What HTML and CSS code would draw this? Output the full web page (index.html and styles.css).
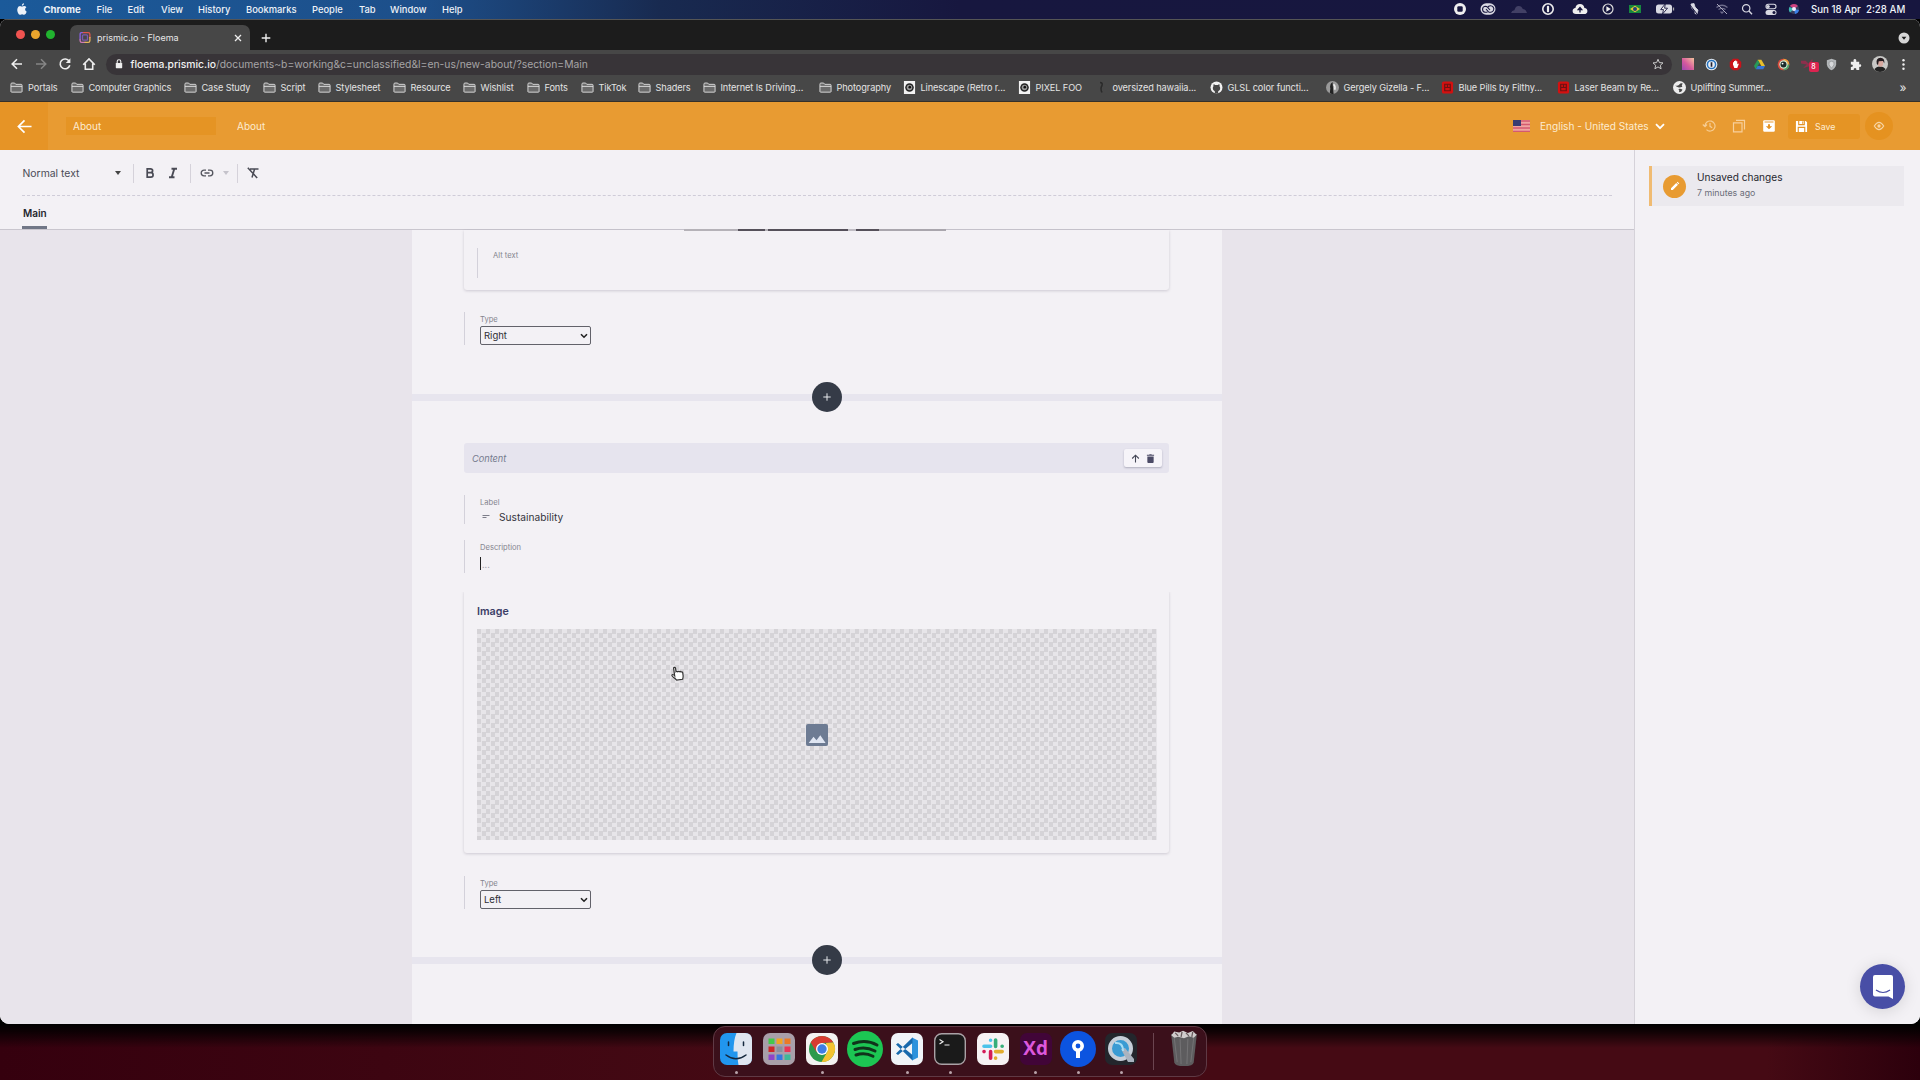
FILE: index.html
```html
<!DOCTYPE html>
<html lang="en">
<head>
<meta charset="utf-8">
<title>prismic.io - Floema</title>
<link rel="stylesheet" href="styles.css">
</head>
<body>
<svg class="defs" width="0" height="0">
  <symbol id="folder" viewBox="0 0 14 12"><path d="M1 10.5V2.5Q1 1.2 2 1.2H5L6.2 2.6H12Q13 2.6 13 3.6V10.5Q13 11 12 11H2Q1 11 1 10.5Z" fill="#6b6b6b" stroke="#dedede"/><path d="M1 4.8H13" stroke="#dedede"/></symbol>
  <symbol id="eyeball" viewBox="0 0 12 14"><path fill="#f2f2f2" d="M0 0h12v14H0z"/><circle cx="6" cy="7" r="4.6" fill="#222"/><circle cx="6" cy="7" r="3" fill="#999"/><circle cx="6.3" cy="6.6" r="1.4" fill="#111"/></symbol>
  <symbol id="redbook" viewBox="0 0 13 14"><rect x=".5" y=".5" width="12" height="13" rx="2" fill="#d31010"/><path d="M3.5 3.5h6v7h-6zM3.5 7h6M6.5 3.5V7" fill="none" stroke="#6d1212" stroke-width="1.3"/></symbol>
  <symbol id="globe" viewBox="0 0 12 12"><circle cx="6" cy="6" r="6" fill="#ececec"/><path d="M2 4.2Q4.500 5 5.600 3.400 6.800 1.800 9 2.200 7.400 4 8.600 5.200 6.500 6.200 5.400 5.900 3.400 5.800 2 4.200ZM5 7.400Q7 6.800 8.800 8 7.800 10.300 5.600 10.400 6.200 8.800 5 7.400Z" fill="#474747"/></symbol>
</svg>

<header class="menubar">
  <svg class="apple" viewBox="0 0 10 12"><path fill="#eef3fa" d="M7 .2Q7.1 1.3 6.4 2.1 5.8 2.8 4.9 2.8 4.8 1.8 5.4 1.1 6 .4 7 .2ZM7 3.1Q8.6 3.1 9.4 4.3 8 5.2 8.1 6.6 8.2 8.2 9.7 8.8 8.7 11.7 7.2 11.8 6.6 11.8 5.9 11.5 5.1 11.2 4.3 11.5 3.6 11.8 3.1 11.8 1.9 11.8 1 9.9 0 7.9.3 6 .8 3.2 3 3.1 3.7 3.1 4.3 3.4 5 3.7 5.5 3.5 6.3 3.1 7 3.1Z"/></svg>
  <nav class="menus"><b>Chrome</b><span>File</span><span>Edit</span><span>View</span><span>History</span><span>Bookmarks</span><span>People</span><span>Tab</span><span>Window</span><span>Help</span></nav>
  <div class="status">
    <svg viewBox="0 0 16 16"><circle cx="8" cy="8" r="6" fill="#eee"/><rect x="5.3" y="5.3" width="5.4" height="5.4" rx="1.2" fill="#18173f"/></svg>
    <svg viewBox="0 0 16 16"><rect x=".5" y="2.300" width="15" height="11.400" rx="5.700" fill="#d9d9e3"/><path d="M7.500 11.300H5.100A3.100 3.100 0 0 1 5.100 5.200Q6.700 5.200 7.700 6.400L10 9M8.500 11.300H10.900A3.300 3.300 0 1 0 7.600 6.500M6 8 8.500 10.800" fill="none" stroke="#18173f" stroke-width="1.100"/></svg>
    <svg viewBox="0 0 16 16"><path d="M0 12Q1 9.200 3.400 9.300 4.400 5 7.500 5 10.500 4.800 11.800 8 15 8 16 12Z" fill="#424065"/></svg>
    <svg viewBox="0 0 16 16"><circle cx="8" cy="8" r="5.200" fill="none" stroke="#eee" stroke-width="1.600"/><rect x="6.900" y="4.800" width="2.200" height="6.400" rx="1" fill="#eee"/></svg>
    <svg viewBox="0 0 16 16"><path d="M4 13Q.6 13 .6 10 .7 7.400 3.400 7.100 4 3 8 3 11.800 3.200 12.400 7 15.500 7.300 15.400 10.200 15.300 13 12 13Z" fill="#eee"/><path d="M8 11.500V8M6.300 8.500 8 6.500l1.700 2Z" fill="#18173f" stroke="#18173f" stroke-width="1.300"/></svg>
    <svg viewBox="0 0 16 16"><circle cx="8" cy="8" r="5" fill="none" stroke="#ddd" stroke-width="1.200"/><path d="M6.400 5.300 10.800 8 6.400 10.700Z" fill="#eee"/></svg>
    <svg viewBox="0 0 16 16"><path d="M2 4h12v8H2z" fill="#16883f"/><path d="M3 8 8 4.800 13 8 8 11.200Z" fill="#e5cb36"/><circle cx="8" cy="8" r="2" fill="#233f7c"/></svg>
    <svg class="battery" viewBox="0 0 20 16"><rect x="1" y="3.500" width="16" height="9" rx="2.500" fill="#d9d9e3"/><path d="M18.500 6.500v3" stroke="#aaa" stroke-width="1.300"/><path d="M10.300 2.800 5.700 8.600H8.500L7.500 13l5-5.800H9.600Z" fill="#eee" stroke="#18173f" stroke-width=".9"/></svg>
    <svg viewBox="0 0 16 16"><path d="M5 3l3-.5L9 6l3 3-1 4-2-.5V10L5.500 7Z" fill="#d9d9e3" stroke="#d9d9e3" stroke-width=".8"/><path d="m4 4 7 9" stroke="#18173f"/></svg>
    <svg viewBox="0 0 16 16"><path d="M2.500 6.500Q8 2 13.500 6.500M4.500 8.600Q8 6 11.500 8.600M6.500 10.500 8 12l1.500-1.500" fill="none" stroke="#6d6c8b" stroke-width="1.300"/><path d="m3 3 10 10" stroke="#aaa9bd"/></svg>
    <svg viewBox="0 0 16 16"><circle cx="7.200" cy="7.300" r="3.700" fill="none" stroke="#d9d9e3" stroke-width="1.200"/><path d="m10 10 3 3.200" stroke="#d9d9e3" stroke-width="1.400"/></svg>
    <svg viewBox="0 0 16 16"><rect x="3" y="3.300" width="10" height="4.400" rx="2.200" fill="none" stroke="#d9d9e3" stroke-width="1.100"/><circle cx="5.200" cy="5.500" r="1.600" fill="#d9d9e3"/><rect x="2.500" y="9" width="11" height="5" rx="2.500" fill="#d9d9e3"/><circle cx="11" cy="11.500" r="1.500" fill="#18173f"/></svg>
    <svg viewBox="0 0 16 16"><circle cx="8" cy="8" r="5" fill="#38405f"/><path d="M8 8 4 4.800A5 5 0 0 1 12 5Z" fill="#d0417f"/><path d="M8 8l5 1a5 5 0 0 1-4 4Z" fill="#3c80e6"/><path d="M8 8l-4 3.500A5 5 0 0 1 3.500 6Z" fill="#3fb7b3"/><circle cx="8" cy="8" r="2" fill="#eef"/></svg>
    <span class="clock">Sun 18 Apr&nbsp; 2:28 AM</span>
  </div>
</header>

<main class="window">
  <div class="tabstrip">
    <div class="lights"><i class="red"></i><i class="yellow"></i><i class="green"></i></div>
    <div class="tab">
      <svg class="favicon" viewBox="0 0 13 13"><path d="M4.500 1.200H2.800Q1.200 1.200 1.200 3V9" stroke="#8a62e8"/><path d="M1.200 8.500V10Q1.200 11.800 3 11.800H7" stroke="#d17ab8"/><path d="M4 1.200H10Q11.800 1.200 11.800 3V7" stroke="#e0564c"/><path d="M11.800 6V10Q11.800 11.800 10 11.800H6" stroke="#e6b65a"/><rect x="3.800" y="3.600" width="5.400" height="5.800" rx="1" stroke="#7a5ab2"/></svg>
      <span class="tab-title">prismic.io - Floema</span>
      <svg class="close" viewBox="0 0 8 8"><path d="m1 1 6 6M7 1 1 7" stroke="#eee" stroke-width="1.300"/></svg>
    </div>
    <svg class="newtab" viewBox="0 0 10 10"><path d="M5 .7v8.600M.7 5h8.600" stroke="#eee" stroke-width="1.400"/></svg>
    <svg class="tabsearch" viewBox="0 0 12 12"><circle cx="6" cy="6" r="5.500" fill="#d6d6d6"/><path d="M3.600 4.800H8.400L6 7.800Z" fill="#1c1c1c"/></svg>
  </div>

  <div class="toolbar">
    <svg class="nav" viewBox="0 0 14 14"><path d="M12 7H2.500M7 2.200 2.200 7 7 11.800" fill="none" stroke="#eee" stroke-width="1.600"/></svg>
    <svg class="nav" viewBox="0 0 14 14"><path d="M2 7H11.500M7 2.200 11.800 7 7 11.800" fill="none" stroke="#858585" stroke-width="1.500"/></svg>
    <svg class="nav" viewBox="0 0 14 14"><path d="M11.200 4.200A4.900 4.900 0 1 0 11.800 8.300" fill="none" stroke="#eee" stroke-width="1.600"/><path d="M12.400 1.200V6H7.800Z" fill="#eee"/></svg>
    <svg class="nav" viewBox="0 0 14 14"><path d="M1.200 7.800 7 2 12.800 7.800M3.300 6.500V12.300H10.700V6.500" fill="none" stroke="#eee" stroke-width="1.600"/></svg>
    <div class="omnibox">
      <svg class="lock" viewBox="0 0 8 10"><rect x=".8" y="4" width="6.400" height="5.200" rx=".6" fill="#eee"/><path d="M2.200 4.400V2.600a1.800 1.800 0 0 1 3.600 0v1.800" fill="none" stroke="#eee" stroke-width="1.100"/></svg>
      <span class="url"><b>floema.prismic.io</b>/documents~b=working&amp;c=unclassified&amp;l=en-us/new-about/?section=Main</span>
      <svg class="star" viewBox="0 0 12 12"><path d="m6 1.300 1.400 3.300 3.600.3-2.700 2.400.8 3.500L6 8.900l-3.100 1.900.8-3.500L1 4.900l3.600-.3Z" fill="none" stroke="#c9c9c9"/></svg>
    </div>
    <div class="extensions">
      <span class="ext"><i class="gradient"></i></span>
      <span class="ext"><svg viewBox="0 0 14 14"><circle cx="7" cy="7" r="6.300" fill="#e9eef4"/><circle cx="7" cy="7" r="4.400" fill="#e9eef4" stroke="#2672bd" stroke-width="1.600"/><path d="M7 4.500v5" stroke="#223" stroke-width="1.800"/></svg></span>
      <span class="ext"><svg viewBox="0 0 14 14"><path d="M4.300.8h5.400l3.500 3.500v5.400l-3.500 3.500H4.300L.8 9.700V4.300Z" fill="#c9131b"/><path d="M4.300 7V4.500h1.100V3.300h1.200V2.800h1.200v.8h1.100v3l1-.8.6.6L8.900 10.800H5.700Z" fill="#fff"/></svg></span>
      <span class="ext"><svg viewBox="0 0 14 14"><path d="M5 2h4l4 6.500H9Z" fill="#e7bf2b"/><path d="M5 2 1 8.700l2 3.300 4-6.700Z" fill="#279a58"/><path d="M13 8.500H5L3 12h8Z" fill="#3675d6"/></svg></span>
      <span class="ext"><svg viewBox="0 0 14 14"><circle cx="7" cy="7" r="6.300" fill="#d94a3c"/><path d="M7 .7a6.300 6.300 0 0 1 6.300 6.300L7 7Z" fill="#e8a03c"/><path d="M7 13.300A6.300 6.300 0 0 0 13.300 7H7Z" fill="#4aa46a"/><circle cx="7" cy="7" r="4.500" fill="#cfe3cb"/><circle cx="7" cy="7" r="3.200" fill="#1d2c2c"/><circle cx="6" cy="6" r="1" fill="#fff"/></svg></span>
      <span class="ext badge-host"><svg viewBox="0 0 14 14"><path d="M0 3h5l3 3 3-4h2L9 9 2 11l4-4-6-1Z" fill="#8c2f4c"/></svg><em class="badge">8</em></span>
      <span class="ext"><svg viewBox="0 0 14 14"><path d="M7 .8 12 2.500V7Q11.500 11 7 13.300 2.500 11 2 7V2.500Z" fill="#b4b7ba"/><path d="M7 3.500 9.600 4.500V7Q9 9.500 7 10.500 5 9.500 4.400 7V4.500Z" fill="#d8dadc" stroke="#8b8e91" stroke-width=".7"/></svg></span>
      <span class="ext"><svg viewBox="0 0 14 14"><path d="M2 4h3Q4.300 1.200 6.300 1.200T7.800 4H11V7Q13.200 6.400 13.200 8.200T11 9.500V13H8Q8.200 10.800 6.500 10.800T5 13H2V9.800Q4.200 9.800 4.200 8.300T2 6.900Z" fill="#eee"/></svg></span>
      <span class="ext"><svg class="avatar" viewBox="0 0 16 16"><circle cx="8" cy="8" r="8" fill="#c8c8c6"/><path d="M2.500 13.800Q4 10.500 8 10.500T13.500 13.800Q11 16 8 16T2.500 13.800Z" fill="#222"/><ellipse cx="8.500" cy="7" rx="2.700" ry="3.700" fill="#d8a9a0"/><path d="M4.800 8Q3.500 2 8.500 1.800 13 2 12.300 7.500L11 5 6.700 5.200 6 9Z" fill="#241c20"/></svg></span>
      <span class="ext"><svg viewBox="0 0 14 14"><g fill="#eee"><circle cx="7" cy="2.500" r="1.300"/><circle cx="7" cy="7" r="1.300"/><circle cx="7" cy="11.500" r="1.300"/></g></svg></span>
    </div>
  </div>

  <div class="bookmarks">
    <a><svg class="bi"><use href="#folder"/></svg>Portals</a>
    <a><svg class="bi"><use href="#folder"/></svg>Computer Graphics</a>
    <a><svg class="bi"><use href="#folder"/></svg>Case Study</a>
    <a><svg class="bi"><use href="#folder"/></svg>Script</a>
    <a><svg class="bi"><use href="#folder"/></svg>Stylesheet</a>
    <a><svg class="bi"><use href="#folder"/></svg>Resource</a>
    <a><svg class="bi"><use href="#folder"/></svg>Wishlist</a>
    <a><svg class="bi"><use href="#folder"/></svg>Fonts</a>
    <a><svg class="bi"><use href="#folder"/></svg>TikTok</a>
    <a><svg class="bi"><use href="#folder"/></svg>Shaders</a>
    <a><svg class="bi"><use href="#folder"/></svg>Internet Is Driving...</a>
    <a><svg class="bi"><use href="#folder"/></svg>Photography</a>
    <a><svg class="bi"><use href="#eyeball"/></svg>Linescape (Retro r...</a>
    <a><svg class="bi"><use href="#eyeball"/></svg>PIXEL FOO</a>
    <a><svg class="bi" viewBox="0 0 13 12"><path d="M5 1q3 0 2 3-2 3 0 7" fill="none" stroke="#2a2a2a" stroke-width="1.500"/></svg>oversized hawaiia...</a>
    <a><svg class="bi" viewBox="0 0 13 13"><circle cx="6.500" cy="6.500" r="6" fill="#f2f2f2"/><path d="M4.800 12.500v-2.300Q2.800 10 2.800 7.300q0-1.300.7-2-.3-1 .1-2 1 0 1.700.7 1.200-.2 2.400 0 .8-.7 1.700-.7.400 1 .1 2 .7.800.7 2 0 2.600-2 2.900v2.300Z" fill="#474747"/></svg>GLSL color functi...</a>
    <a><svg class="bi" viewBox="0 0 12 12"><circle cx="6" cy="6" r="6" fill="#999"/><path d="M6 1Q3 3 4 7l-.5 4A5 5 0 0 0 7 12Z" fill="#222"/><path d="M7 3q2 2 1 5" stroke="#eee" stroke-width="1.500" fill="none"/></svg>Gergely Gizella - F...</a>
    <a><svg class="bi"><use href="#redbook"/></svg>Blue Pills by Filthy...</a>
    <a><svg class="bi"><use href="#redbook"/></svg>Laser Beam by Re...</a>
    <a><svg class="bi"><use href="#globe"/></svg>Uplifting Summer...</a>
    <span class="more">»</span>
  </div>

  <div class="apphead">
    <div class="back"><svg viewBox="0 0 16 16"><path d="M15.500 8H2M8 1.500 1.500 8 8 14.500" fill="none" stroke="#fff" stroke-width="1.800"/></svg></div>
    <div class="uid">About</div>
    <span class="doctitle">About</span>
    <div class="actions">
      <svg class="flag" viewBox="0 0 17 12"><path fill="#f0a3a0" d="M0 0h17v12H0z"/><path d="M0 1h17M0 4.500h17M0 8h17M0 11.500h17" stroke="#d35a70" stroke-width="1.400"/><path fill="#393c72" d="M0 0h8v6H0z"/></svg>
      <span class="lang">English - United States</span>
      <svg class="chev" viewBox="0 0 10 7"><path d="m1 1.200 4 4 4-4" fill="none" stroke="#fff" stroke-width="1.800"/></svg>
      <svg class="act" viewBox="0 0 14 14"><path d="M3 7a5 5 0 1 1 1.500 3.600M.8 5.500 3 7.700 5 5.500M8 4v3.300l2.200 1.400" fill="none" stroke="#f6cc92" stroke-width="1.200"/></svg>
      <svg class="act" viewBox="0 0 14 14"><path d="M4 1.300H12.500V10.500M1.500 3.800h8.500v9H1.500Z" fill="none" stroke="#f7d09c" stroke-width="1.200"/></svg>
      <svg class="act" viewBox="0 0 14 14"><rect x="1.200" y="1.200" width="11.600" height="11.600" rx="1.200" fill="#fff"/><path d="M2.500 3h9" stroke="#e89b32"/><path d="M6 5.200h2v2h2.200L7 10.300 3.800 7.200H6Z" fill="#e59424"/></svg>
      <button class="save"><svg viewBox="0 0 14 14"><path d="M1 1h10.500L13 2.500V13H1Z" fill="#fff"/><path d="M4 1v4h6V1M3.500 13V8h7v5" fill="none" stroke="#e59424" stroke-width="1.200"/><path d="M8.300 1.500v2.700" stroke="#e59424"/></svg>Save</button>
      <div class="preview"><svg viewBox="0 0 14 14"><path d="M1.500 7Q7-1.500 12.500 7 7 15.500 1.500 7Z" fill="none" stroke="#f8d5a4" stroke-width="1.300"/><circle cx="7" cy="7" r="1.900" fill="#f8d5a4"/></svg></div>
    </div>
  </div>

  <div class="workspace">
    <section class="editor">
      <div class="edithead">
        <div class="format">
          <span class="style">Normal text</span>
          <i class="caretdown"></i>
          <span class="group g1">
            <svg viewBox="0 0 12 12"><path d="M3.200 1.900H6.400Q8.600 1.900 8.600 3.800 8.600 5.700 6.400 5.700H3.200ZM3.200 5.700H6.800Q9.100 5.700 9.100 7.900 9.100 10.100 6.800 10.100H3.200Z" fill="none" stroke="#4a4b55" stroke-width="1.700"/></svg>
            <svg viewBox="0 0 12 12"><path d="M4.500 1.700H10M2 10.300H7.500M7.300 1.700 4.700 10.300" fill="none" stroke="#4a4b55" stroke-width="1.900"/></svg>
          </span>
          <span class="group g2">
            <svg viewBox="0 0 14 12"><path d="M6 3.200H4a2.800 2.800 0 0 0 0 5.600H6M8 3.200H10a2.800 2.800 0 0 1 0 5.600H8M4.500 6h5" fill="none" stroke="#55565f" stroke-width="1.300"/></svg>
            <i class="caretdown pale"></i>
          </span>
          <span class="group g3">
            <svg viewBox="0 0 12 12"><path d="M3 1.900H11.500M7.600 2 5 10.500M.8.800 10.200 11" fill="none" stroke="#4a4b55" stroke-width="1.500"/></svg>
          </span>
        </div>
        <div class="tabs"><span class="maintab">Main</span></div>
      </div>
      <div class="canvas">
        <div class="sheet first">
          <div class="card alt">
            <i class="strip"></i>
            <div class="field"><label>Alt text</label></div>
          </div>
          <div class="field type"><label>Type</label><div class="select"><span>Right</span><svg viewBox="0 0 8 6"><path d="m1 1.200 3 3 3-3" fill="none" stroke="#222" stroke-width="1.600"/></svg></div></div>
        </div>
        <div class="divider"><button class="add"><svg viewBox="0 0 8 8"><path d="M4 .3v7.400M.3 4h7.400" stroke="#e8eaee"/></svg></button></div>
        <div class="sheet second">
          <div class="slice">
            <span>Content</span>
            <div class="tools">
              <svg viewBox="0 0 10 10"><path d="M5 9.500V1.500M1.300 5 5 1.300 8.700 5" fill="none" stroke="#444656" stroke-width="1.200"/></svg>
              <svg viewBox="0 0 10 10"><path d="M1.500 2.800h7V9q0 1-1 1h-5q-1 0-1-1ZM1 .8h2.500L4 .2h2l.5.600H9V2H1Z" fill="#4b4a66"/></svg>
            </div>
          </div>
          <div class="field label"><label>Label</label><div class="value"><svg viewBox="0 0 8 6"><path d="M.5 1.500h7M.5 3.500h4" stroke="#7d7e8a"/></svg>Sustainability</div></div>
          <div class="field desc"><label>Description</label><div class="input"><i></i>...</div></div>
          <div class="card image">
            <h3>Image</h3>
            <div class="checker"><svg viewBox="0 0 22 22"><rect width="22" height="22" rx="2" fill="#6d7b93"/><path d="M2.700 19 7.500 12.800 10.500 16.300 14.300 11.300 19.600 19Z" fill="#dfe5f2"/></svg></div>
          </div>
          <div class="field type"><label>Type</label><div class="select"><span>Left</span><svg viewBox="0 0 8 6"><path d="m1 1.200 3 3 3-3" fill="none" stroke="#222" stroke-width="1.600"/></svg></div></div>
        </div>
        <div class="divider"><button class="add"><svg viewBox="0 0 8 8"><path d="M4 .3v7.400M.3 4h7.400" stroke="#e8eaee"/></svg></button></div>
        <div class="sheet third"></div>
      </div>
    </section>
    <aside class="side">
      <div class="change">
        <span class="pen"><svg viewBox="0 0 10 10"><path d="M1 9V7.200L6.200 2 8 3.800 2.800 9ZM6.800 1.400l.7-.7 1.800 1.800-.7.700Z" fill="#fff"/></svg></span>
        <div><strong>Unsaved changes</strong><small>7 minutes ago</small></div>
      </div>
    </aside>
  </div>
  <div class="chat"><svg viewBox="0 0 22 26"><path d="M3 1H19Q21 1 21 3V25L16.500 22.500H3Q1 22.500 1 20.500V3Q1 1 3 1Z" fill="#fff"/><path d="M4 16Q11 21 18 16" fill="none" stroke="#484ea6" stroke-width="1.200"/></svg></div>
  <svg class="pointer" viewBox="0 0 14 15"><path d="M4.300 9.500V2Q4.300 1 5.200 1T6.200 2V5.500Q7 4.900 7.700 5.800 8.600 5.100 9.400 6 10.600 5.500 11.200 6.600 12.700 6.400 12.700 8V10.500Q12.700 12 11.700 14H5.700Q4.500 12 2.500 10.300 1 8.700 2 8 3 7.500 4.300 9.500Z" fill="#fff" stroke="#333" stroke-width="1.200" transform="rotate(-8 7 7)"/></svg>
</main>

<footer class="desktop">
  <div class="dock">
    <span class="app run"><svg viewBox="0 0 32 32"><rect width="32" height="32" rx="7" fill="#2196ee"/><path d="M16.500 0H25Q32 0 32 7V25Q32 32 25 32H18.500Q17.300 26 17.500 18.500H13.500Q13.500 7 16.500 0Z" fill="#dfe6f0"/><path d="M8.500 9v3.500M23.500 9v3.500M6 22Q16 29.500 26 22" fill="none" stroke="#14283e" stroke-width="1.500" stroke-linecap="round"/></svg></span>
    <span class="app"><svg viewBox="0 0 32 32"><rect width="32" height="32" rx="7" fill="#a99fa9"/><path fill="#43c94b" d="M5.500 5.500h6v5.500h-6z"/><path fill="#f0a522" d="M13.500 5.500h6v5.500h-6z"/><path fill="#ea7a26" d="M21.500 5.500h6v5.500h-6z"/><path fill="#cf2727" d="M5.500 13.500h6V19h-6z"/><path fill="#8b8f9a" d="M13.500 13.500h6V19h-6z"/><path fill="#e93457" d="M21.500 13.500h6V19h-6z"/><path fill="#8e45c9" d="M5.500 21.500h6V27h-6z"/><path fill="#3578e0" d="M13.500 21.500h6V27h-6z"/><path fill="#3fb899" d="M21.500 21.500h6V27h-6z"/></svg></span>
    <span class="app run"><svg viewBox="0 0 32 32"><rect width="32" height="32" rx="7" fill="#f3f2f1"/><circle cx="16" cy="16" r="13" fill="#2c9a4c"/><path d="M4.700 9.500A13 13 0 0 1 27.300 9.500L16 10 10.500 19Z" fill="#d83b30"/><path d="M27.300 9.500A13 13 0 0 1 15.500 29L21.500 18.500 20 10Z" fill="#f3c331"/><circle cx="16" cy="16" r="6" fill="#fff"/><circle cx="16" cy="16" r="4.700" fill="#3f7de4"/></svg></span>
    <span class="app"><svg class="big" viewBox="0 0 36 36"><circle cx="18" cy="18" r="18" fill="#1cc653"/><path d="M6.500 12.500Q19 8 30 14M8 18.500Q18 15 28 20M9 24Q18 21 26 25.300" fill="none" stroke="#10331b" stroke-width="3" stroke-linecap="round"/></svg></span>
    <span class="app run"><svg viewBox="0 0 32 32"><rect width="32" height="32" rx="7" fill="#f0f4f8"/><path d="M21 4.500 27 7.500V24.500L21 27.500Z" fill="#2c92dc"/><path d="M5 11.500 7 10 21.500 22V27.500ZM5 20.500 7 22 21.500 10V4.500Z" fill="#1769ac"/></svg></span>
    <span class="app run"><svg viewBox="0 0 32 32"><rect x=".7" y=".7" width="30.600" height="30.600" rx="7" fill="#1a1a1a" stroke="#aaa2a6" stroke-width="1.400"/><path d="m5.500 6.500 3.500 2.300-3.500 2.200M10.500 12h5" fill="none" stroke="#eee" stroke-width="1.200"/></svg></span>
    <span class="app"><svg viewBox="0 0 32 32"><rect width="32" height="32" rx="7" fill="#f6f2f4"/><g fill="none" stroke-width="3.600" stroke-linecap="round"><path d="M13.600 7.200v.1M7 13.300h6.600" stroke="#4cc3ea"/><path d="M18.600 7v6.500M25.200 13.300h-.1" stroke="#36ae7a"/><path d="M18.600 18.600h6.600M18.600 25.200v-.1" stroke="#e3ad2e"/><path d="M13.600 18.600v6.600M7 18.600h.1" stroke="#d41c57"/></g></svg></span>
    <span class="app run"><span class="xd">Xd</span></span>
    <span class="app run"><svg class="big" viewBox="0 0 36 36"><circle cx="18" cy="18" r="18" fill="#0c54e0"/><circle cx="18" cy="15" r="4.200" fill="none" stroke="#fff" stroke-width="3.600"/><path d="M18 18.500v8.500" stroke="#fff" stroke-width="4"/></svg></span>
    <span class="app run"><svg viewBox="0 0 32 32"><rect width="32" height="32" rx="7" fill="#23262c"/><circle cx="15.500" cy="15.500" r="10.500" fill="#3a9bd3" stroke="#c6ced8" stroke-width="4"/><path d="m16 16 4-1 9 11v3h-6Z" fill="#aab3bf"/><path d="M10 10q8-1 8 8" stroke="#a8ddf4" fill="none" stroke-width="2"/></svg></span>
    <i class="sep"></i>
    <span class="trash"><svg viewBox="0 0 28 38"><path d="M.8 4H27.200L24 33Q23.500 37 14 37T4 33Z" fill="#5d5c5e"/><path d="M4 8 7 33M10 9l1 26M18 9l-1 26M24 8l-3 25" stroke="#747375"/><path d="M1 5.500 4 1.500 9 2.500 13 .8 18 3 23 1 27 5 24 8 19 6.500 14 8.500 8 7 4 8Z" fill="#d0cccc"/><path d="m5 3 3 3m4-4-1 5m5-4 3 3m4-4-1 5" stroke="#65585a" stroke-width="1.300"/></svg></span>
  </div>
</footer>
</body>
</html>
```
FILE: styles.css
```css
* { box-sizing: border-box; }
body { margin: 0; width: 1920px; height: 1080px; overflow: hidden; display: flex; flex-direction: column; background: #000; font-family: Inter, "Liberation Sans", sans-serif; font-size: 10px; color: #333540; }
svg { display: block; flex: none; }
button { border: 0; padding: 0; margin: 0; font: inherit; color: inherit; }
.defs { position: absolute; }

/* macOS menu bar */
.menubar { height: 19px; flex: none; display: flex; align-items: center; background: linear-gradient(90deg, #1b5a9a 0, #1d4f8a 420px, #182a50 660px, #17173f 960px, #17163f); color: #eef2f8; font-size: 9.4px; font-weight: 500; }
.apple { width: 10px; height: 12px; margin-left: 17px; margin-top: -2px; }
.menus { margin-left: 16.500px; display: grid; grid-template-columns: 53px 31px 33.500px 37px 48px 66px 47px 31px 52px 40px; white-space: nowrap; }
.menus b { font-weight: 700; font-size: 9.600px; }
.status { margin-left: auto; margin-right: 9px; margin-top: -1px; display: grid; align-items: center; grid-template-columns: 28px 31px 29px 32px 28px 27px 30px 29px 28px 25px 24px 23px 25px 100px; white-space: nowrap; }
.status svg { width: 16px; height: 16px; }
.status svg.battery { width: 20px; margin-left: -2px; }
.clock { font-size: 9.700px; padding-top: 1px; }

/* browser chrome */
.window { position: relative; height: 1005px; flex: none; display: flex; flex-direction: column; overflow: hidden; border-radius: 8px 8px 9px 9px; background: #f3f1f5; }
.tabstrip { height: 31px; flex: none; display: flex; align-items: center; background: #1c1c1c; border-top: 1px solid #555; }
.lights { display: flex; gap: 6px; margin: -2px 0 0 16px; width: 54px; }
.lights i { width: 9px; height: 9px; border-radius: 50%; }
.red { background: #ef5350; }
.yellow { background: #eba52d; }
.green { background: #21b32f; }
.tab { width: 180px; height: 25px; align-self: flex-end; display: flex; align-items: center; padding: 0 8px 0 9px; border-radius: 7px 7px 0 0; background: #474747; color: #e8e8e8; }
.favicon { width: 12px; height: 13px; fill: none; stroke-width: 1.4; }
.tab-title { margin-left: 6px; font-size: 9px; }
.close { width: 8px; height: 8px; margin-left: auto; }
.newtab { width: 10px; height: 10px; margin-left: 11px; margin-top: 6px; }
.tabsearch { width: 12px; height: 12px; margin-left: auto; margin-right: 10px; margin-top: 6px; }
.toolbar { height: 26px; flex: none; display: flex; align-items: center; background: #474747; padding: 2px 4.500px 0 9.500px; }
.nav { width: 14px; height: 14px; margin-right: 10px; }
.omnibox { flex: 1; height: 21px; display: flex; align-items: center; border-radius: 11px; background: #383438; padding: 0 8px 0 9px; color: #a6a4a6; font-size: 10.350px; }
.lock { width: 8px; height: 10px; }
.url { margin-left: 8px; white-space: nowrap; }
.url b { font-weight: 500; color: #f2f2f2; }
.star { width: 12px; height: 12px; margin-left: auto; }
.extensions { display: flex; margin-left: 4px; }
.ext { width: 24px; display: flex; justify-content: center; align-items: center; }
.ext svg { width: 13px; height: 13px; }
.ext svg.avatar { width: 16px; height: 16px; }
.gradient { width: 12px; height: 12px; background: linear-gradient(225deg, #f4c29c, #d65a9c 55%, #9b49b4); }
.badge-host { position: relative; }
.badge { position: absolute; left: 13px; top: 6px; width: 10px; height: 10px; border-radius: 2px; background: #dc2350; color: #fff; font: 500 7px/10px Inter, sans-serif; text-align: center; }
.bookmarks { height: 26px; flex: none; display: grid; align-items: center; padding-left: 10px; padding-bottom: 2px; background: #474747; color: #e4e4e4; font-size: 9.200px; border-bottom: 1px solid #35302a; white-space: nowrap; letter-spacing: -.1px;
  grid-template-columns: 60.500px 113px 79px 55px 75px 70px 64px 54px 57px 65px 116px 84px 115px 77px 115px 116px 115px 116px 116px 227px auto; }
.bookmarks a { display: flex; align-items: center; gap: 5px; }
.bi { width: 13px; height: 13px; }
.more { font-size: 12px; }

/* document header */
.apphead { height: 48px; flex: none; display: flex; align-items: center; background: #e89b32; color: #fdebd0; }
.back { width: 48px; height: 48px; display: flex; align-items: center; justify-content: center; background: #e69426; }
.back svg { width: 15px; height: 15px; }
.uid { width: 150px; height: 18px; margin-left: 18px; padding-left: 7px; line-height: 18px; background: #e59424; }
.doctitle { margin: -1px 0 0 21px; }
.actions { margin-left: auto; display: flex; align-items: center; margin-right: 27px; }
.flag { width: 17px; height: 12px; }
.lang { width: 115px; margin: -1px 0 0 10px; font-size: 10.100px; white-space: nowrap; }
.chev { width: 10px; height: 7px; margin-right: 37px; }
.act { width: 14px; height: 14px; margin-right: 16px; }
.save { width: 72px; height: 25px; margin-left: -4px; padding-left: 7px; display: flex; align-items: center; gap: 7px; border-radius: 3px; background: #e59424; font-size: 8.800px; }
.save svg { width: 13px; height: 13px; }
.preview { width: 28px; height: 28px; margin-left: 5px; display: flex; align-items: center; justify-content: center; border-radius: 50%; background: #e59220; }
.preview svg { width: 12px; height: 12px; }

/* editor */
.workspace { flex: 1; min-height: 0; display: flex; }
.editor { width: 1634px; display: flex; flex-direction: column; }
.edithead { height: 80px; flex: none; padding: 0 22px; background: #f3f1f5; border-bottom: 1px solid #c9c6ce; }
.format { height: 46px; display: flex; align-items: center; padding: 1px 0 0 .500px; border-bottom: 1px dashed #cfccd8; }
.style { width: 92.500px; font-size: 10.400px; color: #4a4b55; }
.caretdown { border: 3px solid transparent; border-top: 4px solid #444; border-bottom: 0; }
.caretdown.pale { border-top-color: #c5c3cb; margin-left: 9px; }
.group { height: 19px; display: flex; align-items: center; border-left: 1px solid #d5d2da; }
.group svg { width: 12px; height: 12px; }
.g1 { margin-left: 12px; padding-left: 10px; gap: 11px; width: 57px; }
.g2 { padding-left: 9px; width: 47px; }
.g2 svg { width: 14px; }
.g3 { padding-left: 9px; }
.tabs { height: 34px; display: flex; }
.maintab { width: 25px; padding-left: 1px; border-bottom: 3px solid #717787; line-height: 34px; font-weight: 600; font-size: 10px; height: 33px; color: #24252d; }
.canvas { flex: 1; min-height: 0; display: flex; flex-direction: column; align-items: center; background: #e8e4eb; }
.sheet { width: 810px; padding: 0 53px 0 52px; background: #f3f1f5; flex: none; }
.first { height: 164px; }
.second { height: 556px; padding-top: 42px; }
.sheet.third { flex: 1; }
.divider { position: relative; width: 810px; height: 7px; flex: none; background: #e7e5ee; }
.add { position: absolute; left: 400px; top: -12px; width: 30px; height: 30px; border-radius: 50%; display: flex; align-items: center; justify-content: center; background: #353b47; }
.add svg { width: 8px; height: 8px; }
.card { border-radius: 3px; box-shadow: 0 1px 3px rgba(60, 50, 80, .2); background: #f3f1f5; }
.alt { position: relative; height: 60px; padding: 18px 0 0 13px; margin-bottom: 22px; border-radius: 0 0 3px 3px; clip-path: inset(-1px -5px -5px -5px); }
.strip { position: absolute; left: 220px; top: -1px; width: 262px; height: 2px; background: linear-gradient(90deg, #b5b2b8 0 54px, #55505a 54px 81px, #b5b2b8 81px 84px, #55505a 84px 164px, #c0bdc4 164px 172px, #55505a 172px 195px, #a9a6ad 195px); }
.field { border-left: 1px solid #d3d1da; padding-left: 15px; color: #33343c; }
.field label { display: block; height: 14px; line-height: 16px; font-size: 7.600px; color: #85858f; }
.alt .field { height: 30px; }
.type { height: 33px; }
.select { width: 111px; height: 19px; display: flex; align-items: center; justify-content: space-between; padding: 0 2px 0 3px; border: 1px solid #62626a; border-radius: 2px; font-size: 9.500px; color: #2e2e34; }
.select svg { width: 8px; height: 6px; }
.slice { height: 30px; margin-bottom: 22px; display: flex; align-items: center; justify-content: space-between; padding: 0 7px 0 8px; border-radius: 3px; background: #e6e4ee; font-size: 9.200px; font-style: italic; color: #757b8d; }
.tools { width: 38px; height: 18px; display: flex; align-items: center; justify-content: center; gap: 6px; border-radius: 2px; background: #f6f4f9; box-shadow: 0 1px 2px rgba(50, 50, 80, .3); }
.tools svg { width: 9px; height: 9px; }
.label { height: 29px; margin-bottom: 16px; }
.value { display: flex; align-items: center; height: 16px; gap: 9px; padding-left: 2px; font-size: 10.200px; }
.value svg { width: 8px; height: 6px; }
.desc { height: 33px; margin-bottom: 17px; }
.input { display: flex; height: 13px; margin-top: 3px; color: #a9a7b2; font-size: 9px; line-height: 16px; }
.input i { width: 1px; height: 13px; background: #222; margin-right: 1px; }
.image { height: 263px; padding: 0 12px 0 13px; margin-bottom: 23px; clip-path: inset(2px -5px -5px -5px); }
.image h3 { margin: 0; height: 39px; padding-top: 1px; line-height: 42px; font-size: 10.700px; font-weight: 600; color: #3b3d66; }
.checker { height: 211px; display: flex; align-items: center; justify-content: center; background: conic-gradient(#e7e5e9 25%, #d5d3d7 0 50%, #e7e5e9 0 75%, #d5d3d7 0) 0 0 / 9px 9px; }
.checker svg { width: 22px; height: 22px; }

/* history sidebar */
.side { flex: 1; padding: 16px 16px 0 14px; border-left: 1px solid #d5d2d9; background: #f3f1f5; }
.change { height: 40px; display: flex; align-items: center; gap: 11px; padding-left: 11px; border-left: 3px solid #f0bb72; background: #ebe9ee; }
.pen { width: 23px; height: 23px; display: flex; align-items: center; justify-content: center; border-radius: 50%; background: #e89b32; }
.pen svg { width: 10px; height: 10px; }
.change strong { display: block; margin-top: -1px; font-size: 10.100px; font-weight: 400; line-height: 15px; color: #26272e; }
.change small { display: block; font-size: 8.800px; line-height: 16px; color: #6c6e7a; }
.chat { position: absolute; left: 1860px; top: 945px; width: 45px; height: 45px; display: flex; align-items: center; justify-content: center; border-radius: 50%; background: #484ea6; box-shadow: 0 2px 16px rgba(0, 0, 0, .13); }
.chat svg { width: 22px; height: 26px; }
.pointer { position: absolute; left: 670px; top: 647px; width: 14px; height: 15px; }

/* dock */
.desktop { flex: 1; display: flex; justify-content: center; align-items: flex-start; padding-top: 2px; background: linear-gradient(180deg, #000 0, rgba(0, 0, 0, .75) 8px, transparent 24px), linear-gradient(90deg, #35000e, #450a14 40%, #450a14 92%, #2c000c); }
.dock { width: 494px; height: 51px; display: flex; align-items: flex-start; padding: 0 8px 0 1px; border: 1px solid #5f3a45; border-radius: 12px; background: #3b101b; }
.app { position: relative; width: 42.750px; height: 49px; display: flex; align-items: center; justify-content: center; padding-bottom: 5px; }
.app svg { width: 32px; height: 32px; }
.app svg.big { width: 36px; height: 36px; }
.run::after { content: ""; position: absolute; left: 20px; bottom: 2px; width: 3px; height: 3px; border-radius: 50%; background: #b9a3aa; }
.xd { width: 32px; height: 32px; border-radius: 7px; background: #410538; color: #dd58dd; font: 700 19px/31px "Open Sans", sans-serif; text-align: center; }
.sep { width: 1px; height: 37px; margin: 6px 16px 0 10px; background: #6b4550; }
.trash svg { width: 28px; height: 37px; margin-top: 3px; }
```
